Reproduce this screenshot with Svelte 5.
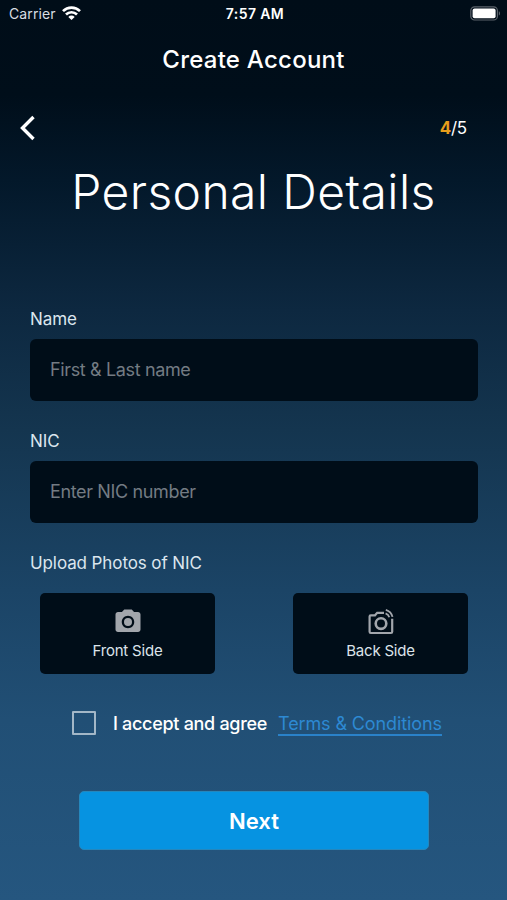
<script>
  let step = 4
  let total = 5
  let name = ''
  let nic = ''
  let accepted = false
</script>

<div class="screen">
  <div class="status">
    <div class="carrier">
      <span>Carrier</span>
      <svg width="19" height="14" viewBox="0 0 19 14">
        <g fill="none" stroke="#fff" stroke-width="2.7">
          <path d="M1 5.1a12.2 12.2 0 0 1 17 0" />
          <path d="M4 8.5a7.8 7.8 0 0 1 11 0" />
        </g>
        <path d="M9.5 14 6.3 10.9a4.500 4.500 0 0 1 6.400 0z" fill="#fff" />
      </svg>
    </div>
    <span class="time">7:57 AM</span>
    <svg class="battery" width="31" height="15" viewBox="0 0 31 15">
      <rect x="0.8" y="0.8" width="26.6" height="13.2" rx="3.8" fill="none" stroke="#5b636b" stroke-width="1.2" />
      <rect x="2.6" y="2.6" width="23" height="9.6" rx="2" fill="#fff" />
      <path d="M28.8 5.2c1.6.6 1.6 3.8 0 4.4z" fill="#5b636b" />
    </svg>
  </div>

  <h2>Create Account</h2>

  <div class="nav">
    <button class="back" aria-label="Back">
      <svg width="18" height="26" viewBox="0 0 18 26">
        <path d="M14.5 2 3.5 13l11 11" fill="none" stroke="#fff" stroke-width="3.4" />
      </svg>
    </button>
    <div class="steps"><b>{step}</b>/{total}</div>
  </div>

  <h1>Personal Details</h1>

  <form on:submit|preventDefault>
    <label for="name">Name</label>
    <input id="name" class="field" type="text" placeholder="First & Last name" bind:value={name} />

    <label for="nic">NIC</label>
    <input id="nic" class="field" type="text" placeholder="Enter NIC number" bind:value={nic} />

    <div class="upload">Upload Photos of NIC</div>
    <div class="photos">
      <button type="button" class="photo">
        <svg width="30" height="30" viewBox="0 0 24 24" fill="#a2a6ac">
          <circle cx="12" cy="12" r="3.2" />
          <path d="M9 2 7.17 4H4c-1.1 0-2 .9-2 2v12c0 1.1.9 2 2 2h16c1.1 0 2-.9 2-2V6c0-1.1-.9-2-2-2h-3.17L15 2H9zm3 15c-2.76 0-5-2.24-5-5s2.24-5 5-5 5 2.24 5 5-2.24 5-5 5z" />
        </svg>
        <span>Front Side</span>
      </button>
      <button type="button" class="photo">
        <svg width="30" height="30" viewBox="0 0 30 30" fill="none" stroke="#a2a6ac" stroke-width="2.2">
          <path d="M18 5.800H11.200L9 8.300H4.800Q3.600 8.300 3.600 9.500V24.800Q3.600 26 4.800 26H25Q26.200 26 26.200 24.800V11.800" />
          <circle cx="15" cy="16.600" r="5.300" stroke-width="2.600" />
          <path d="M19.600 6.300a6 6 0 0 1 3.700 4M19.800 2.800a9.600 9.600 0 0 1 6.700 7.100" stroke-width="1.800" />
        </svg>
        <span>Back Side</span>
      </button>
    </div>

    <div class="terms">
      <input id="accept" type="checkbox" bind:checked={accepted} />
      <label for="accept">I accept and agree</label>
      <a href="#terms">Terms &amp; Conditions</a>
    </div>

    <button class="next">Next</button>
  </form>
</div>

<style>
  :global(body) {
    background: #24547c;
  }

  .screen {
    box-sizing: border-box;
    height: 900px;
    overflow: hidden;
    color: #fff;
    font-family: Inter, sans-serif;
    background: linear-gradient(#000d18 0, #000e1a 95px, #03182a 180px, #0d2840 310px, #14354f 430px, #1b4466 590px, #214f75 720px, #25567f 900px);
  }

  h1, h2 {
    margin: 0;
    text-align: center;
  }

  button {
    padding: 0;
    border: 0;
    color: inherit;
    font-family: inherit;
  }

  svg {
    display: block;
  }

  .status {
    display: grid;
    grid-template-columns: 1fr auto 1fr;
    align-items: center;
    height: 26px;
    padding: 0 6px 0 9px;
    font-size: 14px;
  }

  .carrier {
    display: flex;
    align-items: center;
    gap: 6px;
    color: #d8dde2;
    letter-spacing: 0.1px;
  }

  .time {
    font-weight: 600;
    letter-spacing: 0.4px;
  }

  .battery {
    justify-self: end;
  }

  h2 {
    height: 66px;
    font-size: 24px;
    font-weight: 500;
    line-height: 68px;
    letter-spacing: 0.25px;
  }

  .nav {
    display: flex;
    align-items: center;
    justify-content: space-between;
    height: 72px;
    padding: 0 40px 0 19px;
  }

  .back {
    background: none;
  }

  .steps {
    font-size: 17px;
    letter-spacing: -0.2px;
  }

  .steps b {
    color: #e89e1c;
  }

  h1 {
    height: 60px;
    font-size: 48px;
    font-weight: 300;
    line-height: 56px;
    letter-spacing: 0.4px;
  }

  form {
    padding: 82px 30px 0;
  }

  form > label, .upload {
    display: block;
    height: 33px;
    color: #dce6ee;
    font-size: 17px;
    line-height: 27px;
    letter-spacing: -0.1px;
  }

  .field {
    box-sizing: border-box;
    display: block;
    width: 448px;
    height: 62px;
    margin-bottom: 27px;
    padding: 0 20px 2px;
    border: 0;
    border-radius: 6px;
    outline: none;
    background: #000d18;
    color: #fff;
    font: 18px Inter, sans-serif;
    letter-spacing: -0.36px;
  }

  .field::placeholder {
    color: #737b83;
  }

  .upload {
    height: 43px;
  }

  .photos {
    display: flex;
    justify-content: space-between;
    padding: 0 9px 0 10px;
  }

  .photo {
    display: flex;
    flex-direction: column;
    align-items: center;
    width: 175px;
    height: 81px;
    padding-top: 14px;
    border-radius: 5px;
    background: #000d18;
    color: #dce3ea;
    font-size: 15px;
    letter-spacing: -0.2px;
  }

  .photo span {
    margin-top: 5px;
    line-height: 18px;
  }

  .terms {
    display: flex;
    align-items: center;
    height: 30px;
    margin: 34px 0 0 42px;
    font-size: 18px;
    letter-spacing: -0.3px;
    white-space: nowrap;
  }

  .terms input {
    box-sizing: border-box;
    appearance: none;
    width: 24px;
    height: 24px;
    margin: 0 17px 0 0;
    border: 2px solid #a3b7c7;
    border-radius: 1px;
  }

  .terms label {
    font-weight: 500;
    margin-right: 11px;
  }

  .terms a {
    margin-top: 2px;
    border-bottom: 2px solid #2a82c9;
    color: #2d89d2;
    line-height: 21px;
    letter-spacing: -0.12px;
    text-decoration: none;
  }

  .next {
    box-sizing: border-box;
    display: block;
    width: 350px;
    height: 59px;
    margin: 53px 0 0 49px;
    border: 1px solid #2587bd;
    border-radius: 5px;
    background: #0693e1;
    font-size: 22px;
    font-weight: 600;
  }
</style>
